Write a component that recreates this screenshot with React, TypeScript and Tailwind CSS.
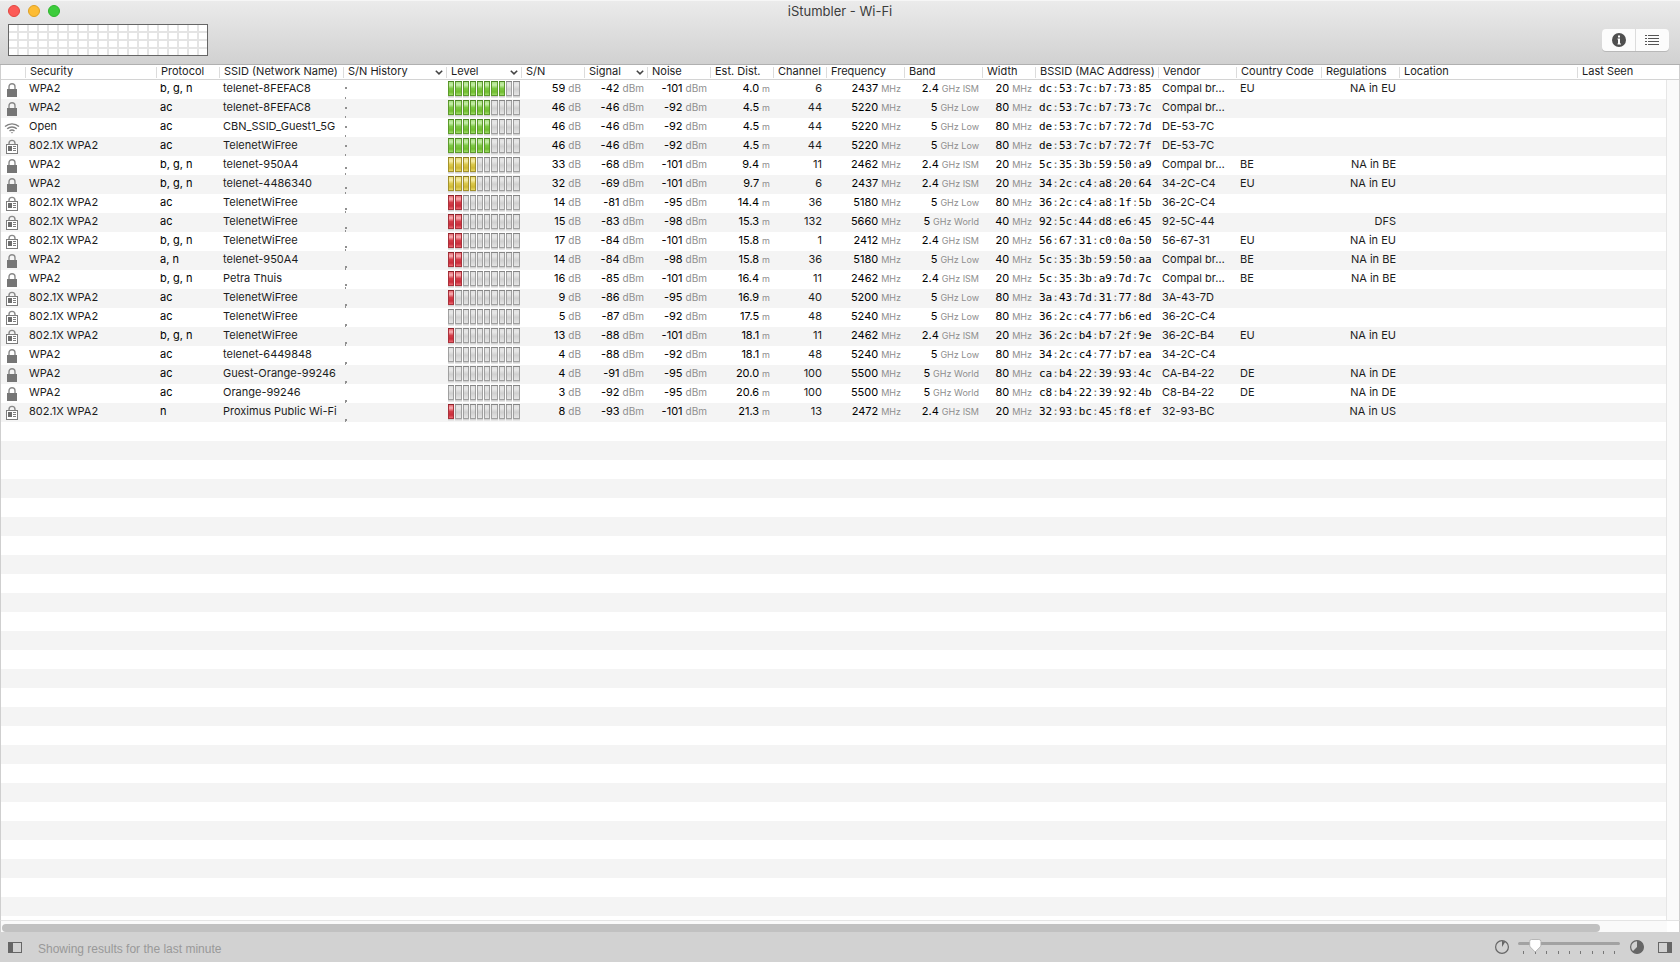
import React, { useState } from "react";

type Kind = "wpa" | "open" | "ent";
type Row = [Kind, string, string, string, number, string, string, string, string, string, string, string, string, string, string, string, string, string];

const rows: Row[] = [
  ["wpa", "WPA2", "b, g, n", "telenet-8FEFAC8", 8, "59", "-42", "-101", "4.0", "6", "2437", "2.4", "ISM", "20", "dc:53:7c:b7:73:85", "Compal br…", "EU", "NA in EU"],
  ["wpa", "WPA2", "ac", "telenet-8FEFAC8", 6, "46", "-46", "-92", "4.5", "44", "5220", "5", "Low", "80", "dc:53:7c:b7:73:7c", "Compal br…", "", ""],
  ["open", "Open", "ac", "CBN_SSID_Guest1_5G", 6, "46", "-46", "-92", "4.5", "44", "5220", "5", "Low", "80", "de:53:7c:b7:72:7d", "DE-53-7C", "", ""],
  ["ent", "802.1X WPA2", "ac", "TelenetWiFree", 6, "46", "-46", "-92", "4.5", "44", "5220", "5", "Low", "80", "de:53:7c:b7:72:7f", "DE-53-7C", "", ""],
  ["wpa", "WPA2", "b, g, n", "telenet-950A4", 4, "33", "-68", "-101", "9.4", "11", "2462", "2.4", "ISM", "20", "5c:35:3b:59:50:a9", "Compal br…", "BE", "NA in BE"],
  ["wpa", "WPA2", "b, g, n", "telenet-4486340", 4, "32", "-69", "-101", "9.7", "6", "2437", "2.4", "ISM", "20", "34:2c:c4:a8:20:64", "34-2C-C4", "EU", "NA in EU"],
  ["ent", "802.1X WPA2", "ac", "TelenetWiFree", 2, "14", "-81", "-95", "14.4", "36", "5180", "5", "Low", "80", "36:2c:c4:a8:1f:5b", "36-2C-C4", "", ""],
  ["ent", "802.1X WPA2", "ac", "TelenetWiFree", 2, "15", "-83", "-98", "15.3", "132", "5660", "5", "World", "40", "92:5c:44:d8:e6:45", "92-5C-44", "", "DFS"],
  ["ent", "802.1X WPA2", "b, g, n", "TelenetWiFree", 2, "17", "-84", "-101", "15.8", "1", "2412", "2.4", "ISM", "20", "56:67:31:c0:0a:50", "56-67-31", "EU", "NA in EU"],
  ["wpa", "WPA2", "a, n", "telenet-950A4", 2, "14", "-84", "-98", "15.8", "36", "5180", "5", "Low", "40", "5c:35:3b:59:50:aa", "Compal br…", "BE", "NA in BE"],
  ["wpa", "WPA2", "b, g, n", "Petra Thuis", 2, "16", "-85", "-101", "16.4", "11", "2462", "2.4", "ISM", "20", "5c:35:3b:a9:7d:7c", "Compal br…", "BE", "NA in BE"],
  ["ent", "802.1X WPA2", "ac", "TelenetWiFree", 1, "9", "-86", "-95", "16.9", "40", "5200", "5", "Low", "80", "3a:43:7d:31:77:8d", "3A-43-7D", "", ""],
  ["ent", "802.1X WPA2", "ac", "TelenetWiFree", 0, "5", "-87", "-92", "17.5", "48", "5240", "5", "Low", "80", "36:2c:c4:77:b6:ed", "36-2C-C4", "", ""],
  ["ent", "802.1X WPA2", "b, g, n", "TelenetWiFree", 1, "13", "-88", "-101", "18.1", "11", "2462", "2.4", "ISM", "20", "36:2c:b4:b7:2f:9e", "36-2C-B4", "EU", "NA in EU"],
  ["wpa", "WPA2", "ac", "telenet-6449848", 0, "4", "-88", "-92", "18.1", "48", "5240", "5", "Low", "80", "34:2c:c4:77:b7:ea", "34-2C-C4", "", ""],
  ["wpa", "WPA2", "ac", "Guest-Orange-99246", 0, "4", "-91", "-95", "20.0", "100", "5500", "5", "World", "80", "ca:b4:22:39:93:4c", "CA-B4-22", "DE", "NA in DE"],
  ["wpa", "WPA2", "ac", "Orange-99246", 0, "3", "-92", "-95", "20.6", "100", "5500", "5", "World", "80", "c8:b4:22:39:92:4b", "C8-B4-22", "DE", "NA in DE"],
  ["ent", "802.1X WPA2", "n", "Proximus Public Wi-Fi", 1, "8", "-93", "-101", "21.3", "13", "2472", "2.4", "ISM", "20", "32:93:bc:45:f8:ef", "32-93-BC", "", "NA in US"],
];

const historyY = [7, 8, 8, 8, 11, 12, 14, 14, 14, 15, 14, 15, 16, 15, 16, 16, 16, 16];

const columns: { title: string; col: string; menu?: boolean }[] = [
  { title: "", col: "w-[24px]" },
  { title: "Security", col: "w-[131px]" },
  { title: "Protocol", col: "w-[63px]" },
  { title: "SSID (Network Name)", col: "w-[124px]" },
  { title: "S/N History", col: "w-[103px]", menu: true },
  { title: "Level", col: "w-[75px]", menu: true },
  { title: "S/N", col: "w-[63px]" },
  { title: "Signal", col: "w-[63px]", menu: true },
  { title: "Noise", col: "w-[63px]" },
  { title: "Est. Dist.", col: "w-[63px]" },
  { title: "Channel", col: "w-[53px]" },
  { title: "Frequency", col: "w-[78px]" },
  { title: "Band", col: "w-[78px]" },
  { title: "Width", col: "w-[53px]" },
  { title: "BSSID (MAC Address)", col: "w-[123px]" },
  { title: "Vendor", col: "w-[78px]" },
  { title: "Country Code", col: "w-[85px]" },
  { title: "Regulations", col: "w-[78px]" },
  { title: "Location", col: "w-[178px]" },
  { title: "Last Seen", col: "" },
];

function SecurityIcon({ kind }: { kind: Kind }) {
  if (kind === "open") {
    return (
      <svg width="16" height="16" viewBox="0 0 16 16" fill="none" stroke="#808080" strokeWidth="1.4" className="block">
        <path d="M1 6.600a10.300 10.300 0 0 1 14 0" />
        <path d="M3.200 8.800a7.200 7.200 0 0 1 9.600 0" />
        <path d="M5.500 11a4 4 0 0 1 5 0" />
        <path d="M6.700 12.200h2.600L8 13.600z" fill="#808080" stroke="none" />
      </svg>
    );
  }
  if (kind === "ent") {
    return (
      <svg width="16" height="16" viewBox="0 0 16 16" className="block">
        <path d="M5 6V4.400a3 3 0 0 1 6 0V6" fill="none" stroke="#8a8a8a" strokeWidth="1.4" />
        <rect x="2.5" y="5.5" width="11" height="9" fill="#fff" stroke="#7c7c7c" />
        <rect x="4" y="7" width="4" height="5" fill="#6e6e6e" />
        <path d="M9 7.500h3M9 9.500h3M9 11.500h3" stroke="#7c7c7c" />
      </svg>
    );
  }
  return (
    <svg width="16" height="16" viewBox="0 0 16 16" className="block">
      <path d="M5 8V4.700a3 3 0 0 1 6 0V8" fill="none" stroke="#8a8a8a" strokeWidth="1.4" />
      <rect x="3" y="7" width="10" height="8" fill="#767676" />
    </svg>
  );
}

const segments = [[0, 6], [7, 7], [15, 6], [22, 6], [29, 6], [36, 6], [43, 7], [51, 6], [58, 6], [65, 7]];

function LevelDefs() {
  return (
    <svg width="0" height="0" className="absolute" aria-hidden="true">
      <defs>
        <linearGradient id="green" x1="0" y1="0" x2="0" y2="1">
          <stop offset="0" stopColor="#a3dd7b" /><stop offset=".25" stopColor="#c6edaa" /><stop offset=".5" stopColor="#7cc843" /><stop offset=".75" stopColor="#71bd2f" /><stop offset="1" stopColor="#a3e070" />
        </linearGradient>
        <linearGradient id="yellow" x1="0" y1="0" x2="0" y2="1">
          <stop offset="0" stopColor="#e5d672" /><stop offset=".25" stopColor="#f5edaa" /><stop offset=".5" stopColor="#dcc94c" /><stop offset=".75" stopColor="#cfb935" /><stop offset="1" stopColor="#eadc70" />
        </linearGradient>
        <linearGradient id="red" x1="0" y1="0" x2="0" y2="1">
          <stop offset="0" stopColor="#e5636b" /><stop offset=".25" stopColor="#f7b0b4" /><stop offset=".5" stopColor="#d43c48" /><stop offset=".75" stopColor="#cb2d3b" /><stop offset="1" stopColor="#ef7179" />
        </linearGradient>
        <linearGradient id="gray" x1="0" y1="0" x2="0" y2="1">
          <stop offset="0" stopColor="#dedede" /><stop offset=".25" stopColor="#e8e8e8" /><stop offset=".55" stopColor="#d0d0d0" /><stop offset="1" stopColor="#e6e6e6" />
        </linearGradient>
      </defs>
    </svg>
  );
}

function Level({ value }: { value: number }) {
  const tone = value > 4 ? "green" : value > 2 ? "yellow" : "red";
  const edge = { green: "#5d9a2c", yellow: "#a3922c", red: "#a8323b" }[tone];
  const top = { green: "#4c8424", yellow: "#8b7b22", red: "#8e222b" }[tone];
  return (
    <svg width="72" height="17" viewBox="0 0 72 17" className="block" role="img" aria-label={`Level ${value} of 10`}>
      {segments.map(([x, w], i) => {
        const on = i < value;
        return (
          <g key={x}>
            <rect x={x} y="15" width={w} height="1" fill="#d2d2d2" />
            <rect x={x} y="16" width={w} height="1" fill="#e6e6e6" />
            <rect x={x + 0.5} y=".5" width={w - 1} height="14" fill={`url(#${on ? tone : "gray"})`} stroke={on ? edge : "#a0a0a0"} />
            <rect x={x} y="0" width={w} height="1" fill={on ? top : "#868686"} />
          </g>
        );
      })}
    </svg>
  );
}

function Measure({ value, unit, small }: { value: string; unit: string; small?: boolean }) {
  return (
    <td className="overflow-hidden pr-[3px] pl-px text-right text-black">
      {value}
      <span className={small ? "ml-[3px] text-[9px] leading-none text-[#8e8e8e]" : "ml-[3px] text-[10px] leading-none text-[#8e8e8e]"}>{unit}</span>
    </td>
  );
}

function WindowSlider() {
  const [value, setValue] = useState(1);
  const x = 6 + value * 11.4;
  return (
    <div className="relative h-[20px] w-[102px]">
      <svg width="102" height="20" viewBox="0 0 102 20" className="block" aria-hidden="true">
        <rect y="5" width="102" height="3" rx="1.5" fill="#a2a2a2" />
        <path d="M5.500 14v3M17.500 14v3M28.500 14v3M40.500 14v3M51.500 14v3M62.500 14v3M74.500 14v3M85.500 14v3M96.500 14v3" stroke="#777" />
        <g transform={`translate(${x - 6} 2)`}>
          <path d="M2 .5h7.500q2 0 2 2v3.700q0 1-.8 1.800L5.800 13 .9 8Q.3 7.200.3 6.200V2.500Q.3.500 2 .5z" fill="#fff" stroke="#aaa" strokeWidth=".8" />
        </g>
      </svg>
      <input type="range" aria-label="Time window" min={0} max={8} value={value} onChange={(e) => setValue(Number(e.target.value))} className="absolute inset-0 m-0 h-full w-full cursor-pointer opacity-0" />
    </div>
  );
}

export default function App() {
  return (
    <div className="flex min-h-screen flex-col bg-[#d2d2d2] font-[Inter,'Liberation_Sans',sans-serif] text-[11px] leading-[14px] text-[#1c1c1c]">
      <LevelDefs />
      <header className="grid h-[65px] grid-cols-[1fr_auto_1fr] border-t border-b border-t-[#f6f6f6] border-b-[#b0b0b0] bg-linear-to-b from-[#ebebeb] to-[#d1d1d1]">
        <div className="flex flex-col pl-2">
          <div className="flex gap-2 pt-1">
            <button aria-label="Close" className="size-3 rounded-full border border-[#e2463f] bg-[#fc5b57]" />
            <button aria-label="Minimize" className="size-3 rounded-full border border-[#dfa023] bg-[#fdbc34]" />
            <button aria-label="Zoom" className="size-3 rounded-full border border-[#2db52c] bg-[#3dcc3c]" />
          </div>
          <svg width="200" height="32" className="mt-[7px] block" role="img" aria-label="Signal graph">
            <rect width="200" height="32" fill="#fff" />
            <path d="M10 0v32M20 0v32M30 0v32M40 0v32M50 0v32M60 0v32M70 0v32M80 0v32M90 0v32M100 0v32M110 0v32M120 0v32M130 0v32M140 0v32M150 0v32M160 0v32M170 0v32M180 0v32M190 0v32M0 8h200M0 16h200M0 24h200" stroke="#e4e4e4" strokeWidth="2" />
            <rect x=".5" y=".5" width="199" height="31" fill="none" stroke="#666" />
          </svg>
        </div>
        <h1 className="pt-[3px] text-[13px] leading-[14px] text-[#3c3c3c]">iStumbler - Wi-Fi</h1>
        <div className="flex items-start justify-end pt-7 pr-[11px]">
          <div className="flex h-[22px] overflow-hidden rounded bg-[#fcfcfc] shadow-[0_1px_0_#b8b8b8]">
            <button aria-label="Info" className="flex w-[34px] items-center justify-center border-r border-[#dcdcdc]">
              <svg width="14" height="14" viewBox="0 0 14 14">
                <circle cx="7" cy="7" r="7" fill="#4f4f4f" />
                <path d="M6 2.500h2v2H6zM5.500 5.500H8v5h1v1H5.500v-1H6v-4h-.5z" fill="#fff" />
              </svg>
            </button>
            <button aria-label="List" className="flex w-[33px] items-center pl-[9px]">
              <svg width="14" height="10" viewBox="0 0 14 10" stroke="#555">
                <path d="M0 .5h2M3 .5h11M0 3.500h2M3 3.500h11M0 6.500h2M3 6.500h11M0 9.500h2M3 9.500h11" />
              </svg>
            </button>
          </div>
        </div>
      </header>

      <main className="relative flex-1 overflow-hidden border-x border-[#cfcfcf] bg-[repeating-linear-gradient(to_bottom,#fff_0px,#fff_19px,#f4f4f4_19px,#f4f4f4_38px)] bg-[position:0_15px]">
        <table className="w-full table-fixed border-separate border-spacing-0 whitespace-nowrap">
          <colgroup>
            {columns.map((c, i) => <col key={i} className={c.col} />)}
          </colgroup>
          <thead>
            <tr className="h-[15px] bg-white">
              {columns.map((c, i) => (
                <th key={i} scope="col" className="border-b border-[#d4d4d4] p-0 text-left font-normal">
                  {i > 0 && (
                    <div className="flex h-[14px] items-center justify-between leading-[12px]">
                      <span className="h-[11px] w-px shrink-0 bg-[#dcdcdc]" />
                      <span className="flex-1 pb-[2px] pl-1">{c.title}</span>
                      {c.menu && (
                        <svg width="8" height="5" viewBox="0 0 8 5" className="mr-[3px] shrink-0" fill="none" stroke="#444" strokeWidth="1.500">
                          <path d="M.8.700l3.200 3.200L7.200.700" />
                        </svg>
                      )}
                    </div>
                  )}
                </th>
              ))}
            </tr>
          </thead>
          <tbody>
            {rows.map(([kind, sec, proto, ssid, level, sn, sig, noise, dist, ch, freq, band, region, width, mac, vendor, cc, reg], i) => (
              <tr key={i} className="h-[19px] align-top leading-[17px] *:py-0">
                <td className="pl-[3px]"><div className="pt-[2px]"><SecurityIcon kind={kind} /></div></td>
                <td className="pl-1">{sec}</td>
                <td className="pl-1 text-black">{proto}</td>
                <td className="overflow-hidden pl-1">{ssid}</td>
                <td className="p-0">
                  <svg width="8" height="19" className="block">
                    <rect x="2" y={historyY[i]} width="2" height="2" fill="#909090" />
                    <rect x="2" y="17" width="1" height="2" fill="#909090" />
                  </svg>
                </td>
                <td className="pl-[2px]"><div className="pt-px"><Level value={level} /></div></td>
                <Measure value={sn} unit="dB" />
                <Measure value={sig} unit="dBm" />
                <Measure value={noise} unit="dBm" />
                <Measure value={dist} unit="m" small />
                <td className="pr-1 text-right">{ch}</td>
                <Measure value={freq} unit="MHz" small />
                <Measure value={band} unit={`GHz ${region}`} small />
                <Measure value={width} unit="MHz" small />
                <td className="pl-1 font-['DejaVu_Sans_Mono',monospace] text-black">
                  {mac.split(":").map((part, n) => (
                    <React.Fragment key={n}>
                      {n > 0 && <span className="text-[#777]">:</span>}
                      {part}
                    </React.Fragment>
                  ))}
                </td>
                <td className="pl-1">{vendor}</td>
                <td className="pl-1">{cc}</td>
                <td className="pr-[3px] text-right">{reg}</td>
                <td />
                <td />
              </tr>
            ))}
          </tbody>
        </table>
        <div className="absolute top-[15px] right-0 bottom-0 w-[13px] border-l border-[#e6e6e6] bg-[#fafafa]" />
      </main>

      <div className="flex h-3 border-x border-t border-x-[#cfcfcf] border-t-[#e4e4e4] bg-white">
        <div className="flex flex-1 items-end bg-[#fafafa] pl-px">
          <div className="h-2 w-[96%] rounded-full bg-[#c1c1c1]" />
        </div>
        <div className="w-3" />
      </div>

      <footer className="flex h-[30px] items-center bg-[#d2d2d2] px-2">
        <button aria-label="Toggle sidebar">
          <svg width="14" height="11" viewBox="0 0 14 11" className="block">
            <rect x=".5" y=".5" width="13" height="10" fill="none" stroke="#666" />
            <rect width="5" height="11" fill="#666" />
          </svg>
        </button>
        <p className="flex-1 pt-1 pl-4 font-['Liberation_Sans',Arial,sans-serif] text-[12px] text-[#999]">Showing results for the last minute</p>
        <svg width="14" height="14" viewBox="0 0 14 14" aria-hidden="true">
          <circle cx="7" cy="7" r="6.400" fill="none" stroke="#666" strokeWidth="1.200" />
          <path d="M7 7V1q2 0 3.300.7z" fill="#666" />
        </svg>
        <div className="pl-[9px]"><WindowSlider /></div>
        <svg width="14" height="14" viewBox="0 0 14 14" className="ml-[10px]" aria-hidden="true">
          <circle cx="7" cy="7" r="6.400" fill="none" stroke="#666" strokeWidth="1.200" />
          <path d="M7 7V.6a6.400 6.400 0 1 1-4.500 10.900z" fill="#666" />
        </svg>
        <button aria-label="Toggle inspector" className="ml-[14px]">
          <svg width="14" height="11" viewBox="0 0 14 11" className="block">
            <rect x=".5" y=".5" width="13" height="10" fill="none" stroke="#666" />
            <rect x="9" width="5" height="11" fill="#666" />
          </svg>
        </button>
      </footer>
    </div>
  );
}
